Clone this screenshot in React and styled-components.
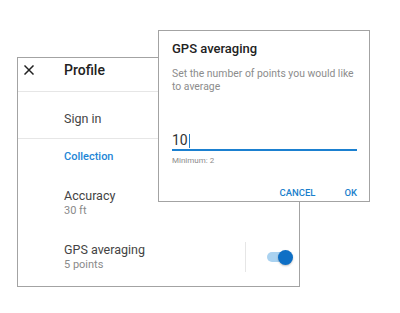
import React from "react";
import styled, { createGlobalStyle } from "styled-components";

const Global = createGlobalStyle`
  html, body { margin: 0; padding: 0; background: #fff; }
  body { font-family: Roboto, "Liberation Sans", Arial, sans-serif; -webkit-font-smoothing: antialiased; }
  * { box-sizing: border-box; }
`;

const Stage = styled.div`
  position: relative;
  width: 400px;
  height: 313px;
  overflow: hidden;
  padding: 57px 0 0 17px;
`;

const Panel = styled.div`
  width: 283px;
  height: 230px;
  border: 1px solid #a3a3a3;
  background: #fff;
  display: flex;
  flex-direction: column;
`;

const Header = styled.div`
  height: 34px;
  display: flex;
  align-items: flex-start;
  padding: 3px 0 0 6px;
  border-bottom: 1px solid #e6e6e6;
`;

const IconBox = styled.div`
  width: 40px;
  height: 18px;
  display: flex;
  align-items: center;
  color: #222;
`;

const HeaderTitle = styled.div`
  font-size: 14px;
  line-height: 18px;
  font-weight: 500;
  color: #222;
`;

const Row = styled.div`
  display: flex;
  align-items: stretch;
  padding: ${(p) => p.$pad || "12px 0 12px 46px"};
  border-bottom: ${(p) => (p.$divider ? "1px solid #e6e6e6" : "none")};
`;

const TextCol = styled.div`
  flex: 1;
  display: flex;
  flex-direction: column;
`;

const Title = styled.div`
  font-size: 12.5px;
  line-height: 16px;
  color: #444;
`;

const Sub = styled.div`
  font-size: 11px;
  line-height: 14px;
  color: #8a8a8a;
`;

const Section = styled.div`
  font-size: 11px;
  line-height: 14px;
  font-weight: 500;
  color: #1e86d6;
  padding: 11px 0 12px 46px;
`;

const VDivider = styled.div`
  width: 1px;
  background: #e6e6e6;
  margin-right: 21px;
`;

const Toggle = styled.div`
  position: relative;
  width: 26px;
  height: 30px;
  margin-right: 6px;
`;

const Track = styled.div`
  position: absolute;
  left: 0;
  top: 10px;
  width: 22px;
  height: 10px;
  border-radius: 5px;
  background: #aad2f0;
`;

const Thumb = styled.div`
  position: absolute;
  right: 0;
  top: 7.5px;
  width: 15px;
  height: 15px;
  border-radius: 50%;
  background: #0e6fc5;
  box-shadow: 0 1px 2px rgba(0, 0, 0, 0.25);
`;

const Dialog = styled.div`
  position: absolute;
  left: 158px;
  top: 30px;
  width: 212px;
  height: 172px;
  background: #fff;
  border: 1px solid #a3a3a3;
  padding: 10px 12px 0 13px;
  display: flex;
  flex-direction: column;
`;

const DialogTitle = styled.div`
  font-size: 13px;
  line-height: 16px;
  font-weight: 500;
  color: #222;
`;

const DialogText = styled.div`
  margin-top: 10px;
  font-size: 10.4px;
  line-height: 13px;
  color: #8c8c8c;
  white-space: nowrap;
`;

const Input = styled.div`
  margin-top: 39px;
  height: 19px;
  border-bottom: 2px solid #1b80d0;
  font-size: 14px;
  line-height: 17px;
  color: #333;
  display: flex;
  align-items: flex-start;
`;

const Caret = styled.span`
  display: inline-block;
  width: 1.5px;
  height: 14px;
  margin-top: 2px;
  margin-left: 1px;
  background: #1b80d0;
`;

const Hint = styled.div`
  margin-top: 5px;
  font-size: 8px;
  line-height: 10px;
  color: #8c8c8c;
`;

const Actions = styled.div`
  margin-top: 21px;
  display: flex;
  justify-content: flex-end;
  gap: 29px;
`;

const Action = styled.div`
  font-size: 9.5px;
  line-height: 12px;
  font-weight: 500;
  color: #1a7fcc;
`;

const CloseIcon = () => (
  <svg width="10" height="10" viewBox="0 0 10 10">
    <path d="M1 1 L9 9 M9 1 L1 9" stroke="#222" strokeWidth="1.5" strokeLinecap="square" />
  </svg>
);

export default function App() {
  return (
    <>
      <Global />
      <Stage>
        <Panel>
          <Header>
            <IconBox>
              <CloseIcon />
            </IconBox>
            <HeaderTitle>Profile</HeaderTitle>
          </Header>
          <Row $divider $pad="19px 0 11px 46px">
            <TextCol>
              <Title>Sign in</Title>
            </TextCol>
          </Row>
          <Section>Collection</Section>
          <Row $pad="12px 0 13px 46px">
            <TextCol>
              <Title>Accuracy</Title>
              <Sub>30 ft</Sub>
            </TextCol>
          </Row>
          <Row $pad="11px 0 12px 46px">
            <TextCol>
              <Title>GPS averaging</Title>
              <Sub>5 points</Sub>
            </TextCol>
            <VDivider />
            <Toggle>
              <Track />
              <Thumb />
            </Toggle>
          </Row>
        </Panel>
        <Dialog>
          <DialogTitle>GPS averaging</DialogTitle>
          <DialogText>
            Set the number of points you would like
            <br />
            to average
          </DialogText>
          <Input>
            10
            <Caret />
          </Input>
          <Hint>Minimum: 2</Hint>
          <Actions>
            <Action>CANCEL</Action>
            <Action>OK</Action>
          </Actions>
        </Dialog>
      </Stage>
    </>
  );
}
